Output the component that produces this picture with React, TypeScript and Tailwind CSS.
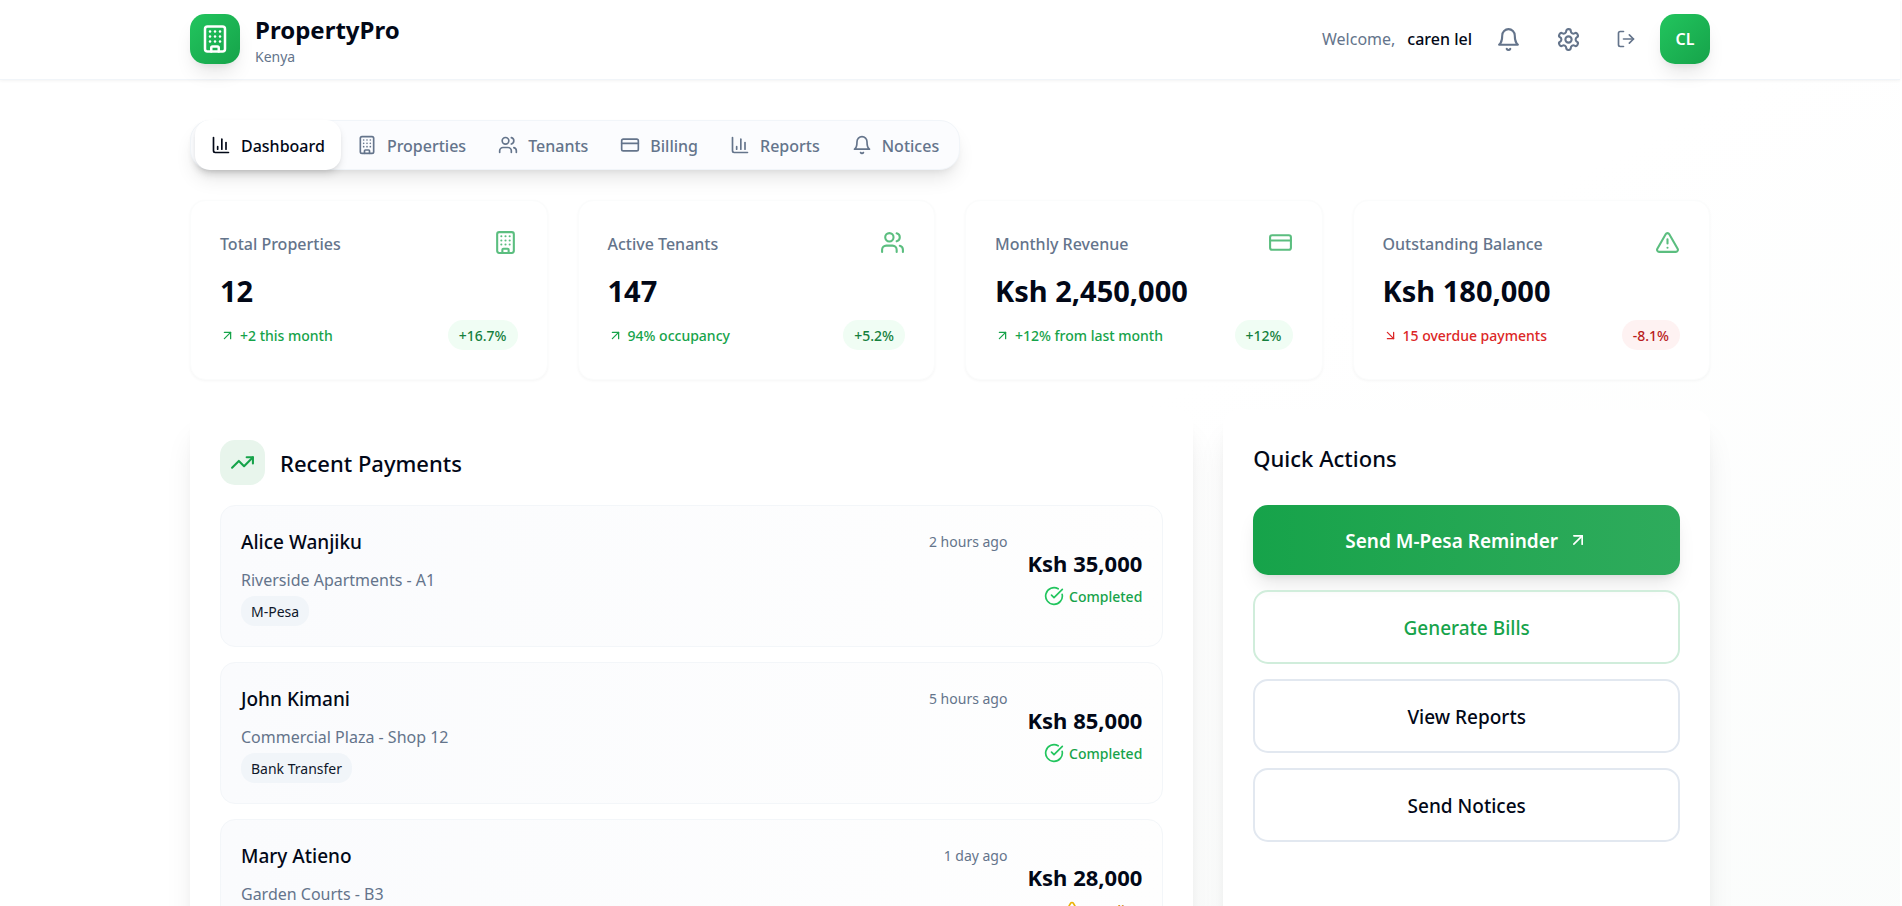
import type { ComponentType, SVGProps } from "react";
import {
  ArrowDownRight,
  ArrowUpRight,
  Building,
  ChartColumn,
  CircleCheckBig,
  CreditCard,
  LogOut,
  TrendingUp,
  TriangleAlert,
  Users,
} from "lucide-react";

type Icon = ComponentType<{ className?: string }>;

const strokeProps: SVGProps<SVGSVGElement> = {
  viewBox: "0 0 24 24",
  fill: "none",
  stroke: "currentColor",
  strokeWidth: 2,
  strokeLinecap: "round",
  strokeLinejoin: "round",
};

function Bell({ className }: { className?: string }) {
  return (
    <svg {...strokeProps} className={className} aria-hidden="true">
      <path d="M6 8a6 6 0 0 1 12 0c0 7 3 9 3 9H3s3-2 3-9" />
      <path d="M10.3 21a1.94 1.94 0 0 0 3.4 0" />
    </svg>
  );
}

function Gear({ className }: { className?: string }) {
  return (
    <svg {...strokeProps} className={className} aria-hidden="true">
      <path d="M12.22 2h-.44a2 2 0 0 0-2 2v.18a2 2 0 0 1-1 1.73l-.43.25a2 2 0 0 1-2 0l-.15-.08a2 2 0 0 0-2.73.73l-.22.38a2 2 0 0 0 .73 2.73l.15.1a2 2 0 0 1 1 1.72v.51a2 2 0 0 1-1 1.74l-.15.09a2 2 0 0 0-.73 2.73l.22.38a2 2 0 0 0 2.73.73l.15-.08a2 2 0 0 1 2 0l.43.25a2 2 0 0 1 1 1.73V20a2 2 0 0 0 2 2h.44a2 2 0 0 0 2-2v-.18a2 2 0 0 1 1-1.73l.43-.25a2 2 0 0 1 2 0l.15.08a2 2 0 0 0 2.73-.73l.22-.39a2 2 0 0 0-.73-2.73l-.15-.08a2 2 0 0 1-1-1.74v-.5a2 2 0 0 1 1-1.74l.15-.09a2 2 0 0 0 .73-2.73l-.22-.38a2 2 0 0 0-2.73-.73l-.15.08a2 2 0 0 1-2 0l-.43-.25a2 2 0 0 1-1-1.73V4a2 2 0 0 0-2-2z" />
      <circle cx="12" cy="12" r="3" />
    </svg>
  );
}

const tabs: { label: string; icon: Icon }[] = [
  { label: "Dashboard", icon: ChartColumn },
  { label: "Properties", icon: Building },
  { label: "Tenants", icon: Users },
  { label: "Billing", icon: CreditCard },
  { label: "Reports", icon: ChartColumn },
  { label: "Notices", icon: Bell },
];

const stats: { title: string; value: string; note: string; change: string; up: boolean; icon: Icon }[] = [
  { title: "Total Properties", value: "12", note: "+2 this month", change: "+16.7%", up: true, icon: Building },
  { title: "Active Tenants", value: "147", note: "94% occupancy", change: "+5.2%", up: true, icon: Users },
  { title: "Monthly Revenue", value: "Ksh 2,450,000", note: "+12% from last month", change: "+12%", up: true, icon: CreditCard },
  { title: "Outstanding Balance", value: "Ksh 180,000", note: "15 overdue payments", change: "-8.1%", up: false, icon: TriangleAlert },
];

const payments = [
  { name: "Alice Wanjiku", unit: "Riverside Apartments - A1", method: "M-Pesa", time: "2 hours ago", amount: "Ksh 35,000", done: true },
  { name: "John Kimani", unit: "Commercial Plaza - Shop 12", method: "Bank Transfer", time: "5 hours ago", amount: "Ksh 85,000", done: true },
  { name: "Mary Atieno", unit: "Garden Courts - B3", method: "M-Pesa", time: "1 day ago", amount: "Ksh 28,000", done: false },
];

function Header() {
  return (
    <header className="border-b border-slate-100 bg-white shadow-[0_1px_3px_rgba(0,0,0,0.05)]">
      <div className="mx-auto flex h-[79px] max-w-[1600px] items-center justify-between px-10 pb-px">
        <div className="flex items-center gap-[15px]">
          <div className="flex size-[50px] items-center justify-center rounded-[15px] bg-linear-to-br from-[#22c55e] to-[#16a34a] text-white shadow-[0_12px_19px_-4px_rgba(0,0,0,0.1),0_5px_8px_-5px_rgba(0,0,0,0.1)]">
            <Building className="size-[30px]" />
          </div>
          <div>
            <h1 className="text-2xl leading-9 font-bold">PropertyPro</h1>
            <p className="text-sm leading-[18px] text-[#64748b]">Kenya</p>
          </div>
        </div>
        <div className="flex items-center gap-3">
          <p className="flex gap-3 text-base text-[#64748b]">
            Welcome, <span className="font-medium text-[#020817]">caren lel</span>
          </p>
          <button type="button" aria-label="Notifications" className="flex size-12 items-center justify-center text-[#64748b]">
            <Bell className="size-[25px]" />
          </button>
          <button type="button" aria-label="Settings" className="flex size-12 items-center justify-center text-[#64748b]">
            <Gear className="size-[25px]" />
          </button>
          <button type="button" aria-label="Log out" className="flex h-12 w-11 items-center justify-center text-[#64748b]">
            <LogOut className="size-5" />
          </button>
          <div className="flex size-[50px] items-center justify-center rounded-[15px] bg-linear-to-br from-[#22c55e] to-[#16a34a] text-base font-semibold text-white shadow-[0_12px_19px_-4px_rgba(0,0,0,0.1),0_5px_8px_-5px_rgba(0,0,0,0.1)]">
            CL
          </div>
        </div>
      </div>
    </header>
  );
}

function Tabs() {
  return (
    <nav className="flex h-[50px] w-fit items-center rounded-[20px] border border-slate-100 bg-[#fbfcfe] px-1 shadow-[0_12px_19px_-4px_rgba(0,0,0,0.1),0_5px_8px_-5px_rgba(0,0,0,0.1)]">
      {tabs.map(({ label, icon: TabIcon }, i) => (
        <button
          key={label}
          type="button"
          className={
            i === 0
              ? "flex h-[50px] items-center gap-2.5 rounded-[15px] bg-white px-4 text-base font-medium text-[#020817] shadow-[0_5px_8px_-1px_rgba(0,0,0,0.1),0_2px_5px_-2px_rgba(0,0,0,0.1)]"
              : "flex h-[50px] items-center gap-2.5 rounded-[15px] px-4 text-base font-medium text-[#64748b]"
          }
        >
          <TabIcon className="size-5" />
          <span className="pt-0.5">{label}</span>
        </button>
      ))}
    </nav>
  );
}

function Stats() {
  return (
    <section className="mt-[30px] grid grid-cols-4 gap-[30px]">
      {stats.map(({ title, value, note, change, up, icon: StatIcon }) => {
        const Arrow = up ? ArrowUpRight : ArrowDownRight;
        return (
          <article key={title} className="rounded-[15px] border border-[#fbfcfc] bg-white p-[29px] shadow-[0_1px_3px_rgba(0,0,0,0.04)]">
            <div className="flex h-[25px] items-center justify-between">
              <h2 className="pt-0.5 text-base font-medium text-[#64748b]">{title}</h2>
              <StatIcon className="size-[25px] text-[#16a34a] opacity-70" />
            </div>
            <p className="mt-4 text-[29px] leading-10 font-bold">{value}</p>
            <div className="mt-[9px] flex h-[30px] items-center justify-between text-sm font-medium">
              <p className={up ? "flex items-center gap-[5px] text-[#16a34a]" : "flex items-center gap-[5px] text-[#dc2626]"}>
                <Arrow className="size-[15px]" />
                <span className="pt-0.5">{note}</span>
              </p>
              <span
                className={
                  up
                    ? "flex h-[30px] items-center rounded-full bg-[#f0fdf4] px-[11px] pt-0.5 text-[#15803d]"
                    : "flex h-[30px] items-center rounded-full bg-[#fef2f2] px-[11px] pt-0.5 text-[#b91c1c]"
                }
              >
                {change}
              </span>
            </div>
          </article>
        );
      })}
    </section>
  );
}

function Payments() {
  return (
    <section className="col-span-2 rounded-[15px] bg-white p-[30px] shadow-[0_25px_31px_-6px_rgba(0,0,0,0.1),0_10px_12px_-7px_rgba(0,0,0,0.1)]">
      <div className="flex items-center gap-[15px]">
        <div className="flex size-[45px] items-center justify-center rounded-[15px] bg-[#e8f5ec] text-[#16a34a]">
          <TrendingUp className="size-[25px]" />
        </div>
        <h2 className="pt-0.5 text-[22px] font-medium">Recent Payments</h2>
      </div>
      <ul className="mt-5 flex flex-col gap-[15px]">
        {payments.map((p) => (
          <li
            key={p.name}
            className="flex items-center gap-5 rounded-[15px] border border-[#f3f6f9] bg-linear-to-r from-[#fafbfd] to-[#fefefe] p-5"
          >
            <div className="grow">
              <div className="flex items-center justify-between">
                <h3 className="text-[19px] leading-8 font-medium">{p.name}</h3>
                <span className="text-sm text-[#64748b]">{p.time}</span>
              </div>
              <p className="mt-2 mb-0.5 text-base leading-7 text-[#64748b]">{p.unit}</p>
              <span className="flex h-[30px] w-fit items-center rounded-[14px] bg-slate-100 px-2.5 pt-0.5 text-sm text-[#0f172a]">
                {p.method}
              </span>
            </div>
            <div className="flex flex-col items-end gap-[5px]">
              <p className="text-[22px] leading-[35px] font-bold">{p.amount}</p>
              {p.done ? (
                <p className="flex h-5 items-center gap-[5px] text-sm font-medium text-[#16a34a]">
                  <CircleCheckBig className="size-5 text-[#22c55e]" />
                  <span className="pt-0.5">Completed</span>
                </p>
              ) : (
                <p className="flex h-5 items-center gap-[5px] text-sm font-medium text-[#ca8a04]">
                  <TriangleAlert className="size-5 text-[#eab308]" />
                  <span className="pt-0.5">Pending</span>
                </p>
              )}
            </div>
          </li>
        ))}
      </ul>
    </section>
  );
}

function QuickActions() {
  return (
    <section className="rounded-[15px] bg-white p-[30px] shadow-[0_25px_31px_-6px_rgba(0,0,0,0.1),0_10px_12px_-7px_rgba(0,0,0,0.1)]">
      <h2 className="text-[22px] leading-[37px] font-medium">Quick Actions</h2>
      <div className="mt-7 flex flex-col gap-[15px] text-[19px] font-medium">
        <button
          type="button"
          className="flex h-[70px] items-center justify-center gap-2.5 rounded-[15px] bg-linear-to-r from-[#16a34a] to-[#2eab5c] font-semibold text-white shadow-[0_12px_19px_-4px_rgba(0,0,0,0.1),0_5px_8px_-5px_rgba(0,0,0,0.1)]"
        >
          <span className="pt-0.5">Send M-Pesa Reminder</span>
          <ArrowUpRight className="size-5" />
        </button>
        <button type="button" className="h-[74px] rounded-[15px] border-2 border-[#d0eddb] pt-0.5 text-[#16a34a]">
          Generate Bills
        </button>
        <button type="button" className="h-[74px] rounded-[15px] border-2 border-[#e2e8f0] pt-0.5">
          View Reports
        </button>
        <button type="button" className="h-[74px] rounded-[15px] border-2 border-[#e2e8f0] pt-0.5">
          Send Notices
        </button>
      </div>
    </section>
  );
}

export default function App() {
  return (
    <div className="mr-0.5 min-h-screen bg-linear-to-br from-white via-white to-[#fafcfb] font-['Noto_Sans',sans-serif] text-[#020817]">
      <Header />
      <main className="mx-auto max-w-[1600px] px-10 pt-10 pb-[30px]">
        <Tabs />
        <Stats />
        <div className="mt-[30px] grid grid-cols-3 gap-[30px]">
          <Payments />
          <QuickActions />
        </div>
      </main>
    </div>
  );
}
